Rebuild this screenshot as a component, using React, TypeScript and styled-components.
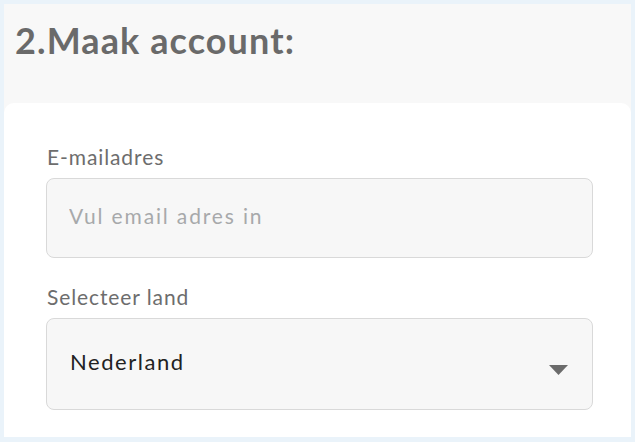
import React from "react";
import styled, { createGlobalStyle } from "styled-components";

const GlobalStyle = createGlobalStyle`
  html, body { margin: 0; padding: 0; }
  body {
    background: #eaf3fa;
    font-family: "Lato", "Noto Sans", sans-serif;
  }
  * { box-sizing: border-box; }
`;

const Frame = styled.div`
  width: 635px;
  height: 442px;
  padding: 4px 4px 5px 4px;
`;

const Panel = styled.div`
  height: 100%;
  background: #f8f8f8;
  display: flex;
  flex-direction: column;
`;

const Header = styled.div`
  height: 99px;
  padding: 16px 0 0 11px;
`;

const Title = styled.h2`
  margin: 0;
  font-family: "Lato", sans-serif;
  font-weight: 700;
  font-size: 36px;
  line-height: 40px;
  color: #6a6a6a;
  letter-spacing: 1.1px;
`;

const Card = styled.div`
  flex: 1;
  background: #ffffff;
  border-radius: 10px 10px 0 0;
  padding: 42px 38px 0 42px;
  display: flex;
  flex-direction: column;
  gap: 27px;
`;

const Field = styled.div`
  display: flex;
  flex-direction: column;
  gap: 9px;
`;

const Label = styled.label`
  font-size: 21px;
  line-height: 24px;
  color: #6d6d6d;
  padding-left: 1px;
  letter-spacing: 0.9px;
`;

const TextInput = styled.input`
  height: 80px;
  width: 100%;
  border: 1px solid #d9d9d9;
  border-radius: 8px;
  background: #f7f7f7;
  padding: 0 22px 5px 22px;
  font-family: "Lato", sans-serif;
  font-size: 21px;
  color: #333;
  letter-spacing: 1.85px;
  outline: none;
  &::placeholder { color: #a7a9ab; }
`;

const SelectWrap = styled.div`
  position: relative;
  height: 92px;
`;

const Select = styled.select`
  appearance: none;
  -webkit-appearance: none;
  width: 100%;
  height: 100%;
  border: 1px solid #d9d9d9;
  border-radius: 8px;
  background: #f7f7f7;
  padding: 0 60px 5px 23px;
  font-family: "Lato", sans-serif;
  font-size: 22px;
  color: #222;
  letter-spacing: 1.55px;
  outline: none;
`;

const Caret = styled.svg`
  position: absolute;
  right: 25px;
  top: 47px;
  pointer-events: none;
`;

export default function App() {
  return (
    <>
      <GlobalStyle />
      <Frame>
        <Panel>
          <Header>
            <Title>2.Maak account:</Title>
          </Header>
          <Card>
            <Field>
              <Label htmlFor="email">E-mailadres</Label>
              <TextInput id="email" type="email" placeholder="Vul email adres in" />
            </Field>
            <Field>
              <Label htmlFor="land">Selecteer land</Label>
              <SelectWrap>
                <Select id="land" defaultValue="nl">
                  <option value="nl">Nederland</option>
                  <option value="be">België</option>
                </Select>
                <Caret width="19" height="10" viewBox="0 0 19 10">
                  <path d="M0 0 H19 L9.5 10 Z" fill="#6b6b6b" />
                </Caret>
              </SelectWrap>
            </Field>
          </Card>
        </Panel>
      </Frame>
    </>
  );
}
